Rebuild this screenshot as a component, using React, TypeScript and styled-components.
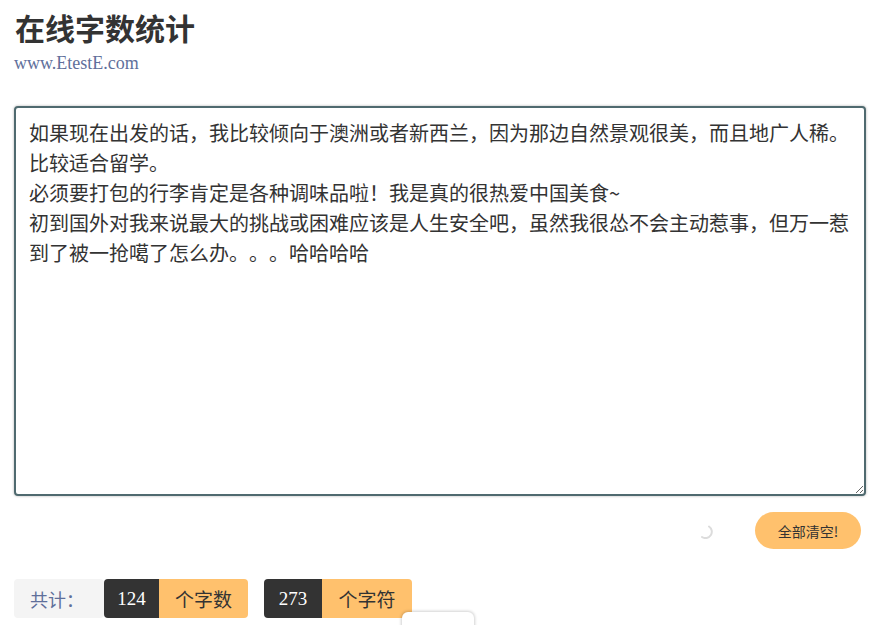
import styled, { createGlobalStyle } from 'styled-components';

const GlobalStyle = createGlobalStyle`
  * {
    margin: 0;
    padding: 0;
    box-sizing: border-box;
  }
  body {
    background: #fff;
    font-family: 'Noto Sans CJK SC', 'Noto Sans', sans-serif;
    color: #333;
  }
`;

const Page = styled.div`
  position: relative;
  width: 892px;
  height: 625px;
  overflow: hidden;
  padding: 0 26px 0 14px;
`;

const Title = styled.h1`
  margin-top: 7px;
  padding-left: 1px;
  font-size: 30px;
  line-height: 40px;
  font-weight: 700;
  color: #333;
`;

const Site = styled.div`
  margin-top: 5px;
  font-family: 'Liberation Serif', serif;
  font-size: 18px;
  line-height: 22px;
  color: #5f6f9b;
`;

const Editor = styled.textarea`
  display: block;
  margin-top: 32px;
  width: 852px;
  height: 390px;
  padding: 10px 13px;
  border: 2px solid #4f6a6f;
  border-radius: 4px;
  box-shadow: 0 0 2px 1px rgba(0, 0, 0, 0.14);
  font-family: 'Noto Sans CJK SC', sans-serif;
  font-size: 20px;
  line-height: 30px;
  color: #333;
  text-spacing-trim: space-all;
  resize: both;
  outline: none;
  overflow: hidden;
`;

const Actions = styled.div`
  display: flex;
  align-items: center;
  justify-content: flex-end;
  gap: 42px;
  margin-top: 16px;
  padding-right: 5px;
  width: 852px;
`;

const Spinner = styled.svg`
  width: 16px;
  height: 16px;
`;

const ClearButton = styled.button`
  width: 106px;
  height: 37px;
  border: none;
  border-radius: 19px;
  background: #ffc16d;
  font-family: 'Noto Sans CJK SC', sans-serif;
  font-size: 14px;
  color: #333;
  cursor: pointer;
`;

const Stats = styled.div`
  display: flex;
  align-items: stretch;
  margin-top: 30px;
  height: 39px;
`;

const Group = styled.div<{ $gap?: number }>`
  display: flex;
  margin-left: ${p => p.$gap ?? 0}px;
  border-radius: 4px;
  overflow: hidden;
`;

const Label = styled.div`
  display: flex;
  align-items: center;
  width: 90px;
  padding-left: 16px;
  background: #f4f4f4;
  border-radius: 4px;
  font-size: 18px;
  color: #5f6f9b;
  text-spacing-trim: space-all;
`;

const Num = styled.div<{ $w: number }>`
  display: flex;
  align-items: center;
  justify-content: center;
  width: ${p => p.$w}px;
  background: #333;
  color: #fff;
  font-family: 'Liberation Serif', serif;
  font-size: 19px;
`;

const Unit = styled.div<{ $w: number }>`
  display: flex;
  align-items: center;
  justify-content: center;
  width: ${p => p.$w}px;
  background: #ffc16d;
  color: #333;
  font-size: 19px;
`;

const Popup = styled.div`
  position: absolute;
  left: 402px;
  top: 612px;
  width: 72px;
  height: 40px;
  background: #fff;
  border-radius: 6px;
  box-shadow: 0 0 3px 1px rgba(0, 0, 0, 0.18);
`;

const text = `如果现在出发的话，我比较倾向于澳洲或者新西兰，因为那边自然景观很美，而且地广人稀。比较适合留学。
必须要打包的行李肯定是各种调味品啦！我是真的很热爱中国美食~
初到国外对我来说最大的挑战或困难应该是人生安全吧，虽然我很怂不会主动惹事，但万一惹到了被一抢噶了怎么办。。。哈哈哈哈`;

const App: React.FC = () => {
  return (
    <>
      <GlobalStyle />
      <Page>
        <Title>在线字数统计</Title>
        <Site>www.EtestE.com</Site>
        <Editor defaultValue={text} spellCheck={false} />
        <Actions>
          <Spinner viewBox="0 0 16 16">
            <path d="M12 3.5 A6 6 0 0 1 5 14" fill="none" stroke="#dcdcdc" strokeWidth="2" strokeLinecap="round" />
          </Spinner>
          <ClearButton>全部清空!</ClearButton>
        </Actions>
        <Stats>
          <Label>共计：</Label>
          <Group>
            <Num $w={55}>124</Num>
            <Unit $w={89}>个字数</Unit>
          </Group>
          <Group $gap={16}>
            <Num $w={58}>273</Num>
            <Unit $w={90}>个字符</Unit>
          </Group>
        </Stats>
        <Popup />
      </Page>
    </>
  );
};

export default App;
